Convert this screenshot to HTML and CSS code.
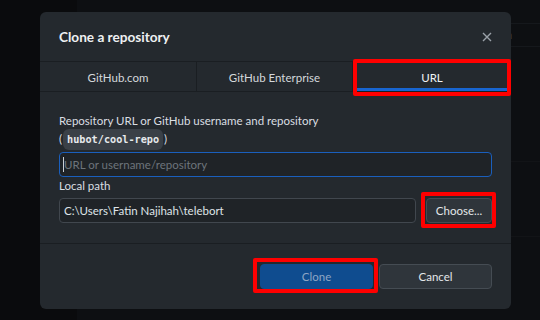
FILE: index.html
```html
<!DOCTYPE html>
<html lang="en">
<head>
<meta charset="utf-8">
<title>Clone a repository</title>
<link rel="stylesheet" href="styles.css">
</head>
<body>
<div class="app">
  <aside class="side"></aside>
  <main class="main">
    <div class="topbar"></div>
    <div class="toolrow"><span class="ghost-btn">Open</span></div>
    <div class="panel"></div>
  </main>
</div>

<div class="dialog">
  <header class="dlg-head">
    <h1 class="title">Clone a repository</h1>
    <button class="close" aria-label="Close">
      <svg width="10" height="10" viewBox="0 0 10 10"><path d="M1 1L9 9M9 1L1 9" stroke="#9aa1a8" stroke-width="1.4" fill="none"/></svg>
    </button>
  </header>
  <nav class="tabs">
    <div class="tab t1">GitHub.com</div>
    <div class="tab t2">GitHub Enterprise</div>
    <div class="tab t3 active hl-tab">URL</div>
  </nav>
  <section class="body">
    <div class="lbl">Repository URL or GitHub username and repository</div>
    <div class="lbl">(<code class="pill">hubot/cool-repo</code>)</div>
    <div class="field focus">
      <input class="inp" type="text" placeholder="URL or username/repository">
      <span class="caret"></span>
    </div>
    <div class="lbl">Local path</div>
    <div class="row">
      <div class="field path"><input class="inp" type="text" value="C:\Users\Fatin Najihah\telebort"></div>
      <button class="btn choose hl">Choose...</button>
    </div>
  </section>
  <footer class="foot">
    <button class="btn primary hl">Clone</button>
    <button class="btn">Cancel</button>
  </footer>
</div>
</body>
</html>
```

FILE: styles.css
```css
* { box-sizing: border-box; }
html, body {
  margin: 0;
  padding: 0;
  width: 540px;
  height: 320px;
  overflow: hidden;
  background: #0d0f12;
  font-family: "Lato", "Noto Sans", sans-serif;
}
.app {
  display: flex;
  width: 540px;
  height: 320px;
}
.side {
  width: 108px;
  background: #0a0b0d;
}
.main {
  flex: 1;
  display: flex;
  flex-direction: column;
  background: #0d0f12;
}
.topbar { height: 23px; }
.toolrow {
  height: 24px;
  padding-left: 403px;
  border-top: 1px solid #15181c;
  border-bottom: 1px solid #15181c;
}
.ghost-btn {
  display: block;
  height: 24px;
  width: 60px;
  border-left: 1px solid #1f2327;
  padding-left: 2px;
  font-size: 12px;
  line-height: 22px;
  color: #3d4349;
}
.panel {
  margin-top: 114px;
  height: 76px;
  border-top: 1px solid #121417;
  border-bottom: 1px solid #121417;
}

.dialog {
  position: absolute;
  left: 40px;
  top: 12px;
  width: 471px;
  height: 297px;
  background: #24292e;
  border-radius: 6px;
  display: flex;
  flex-direction: column;
}
.dlg-head {
  box-sizing: content-box;
  height: 49px;
  border-bottom: 1px solid #1a1e22;
  display: flex;
  align-items: center;
  justify-content: space-between;
  padding: 0 14px 0 19px;
}
.title {
  margin: 0;
  font-size: 13.6px;
  font-weight: 700;
  color: #eef0f2;
  padding-top: 1px;
}
.close {
  width: 20px;
  height: 20px;
  padding: 0;
  border: 0;
  background: transparent;
  display: flex;
  align-items: center;
  justify-content: center;
}
.tabs {
  box-sizing: content-box;
  height: 29px;
  border-bottom: 1px solid #1a1e22;
  display: flex;
}
.tab {
  position: relative;
  flex: none;
  display: flex;
  align-items: center;
  justify-content: center;
  font-size: 11.5px;
  color: #d4d8dc;
  border-right: 1px solid #1a1e22;
  padding-top: 1px;
}
.t1 { width: 157px; }
.t2 { width: 156px; }
.t3 { width: 158px; border-right: 0; }
.tab.active {
  color: #f2f4f6;
  box-shadow: inset 0 -3px 0 #1865d0;
}
.hl-tab::after {
  content: "";
  position: absolute;
  left: 0;
  right: 0;
  top: -3px;
  bottom: -5px;
  border: 4px solid #ff0000;
  border-radius: 2px;
}
.body {
  height: 111px;
  padding: 20px 19px 20px;
  border-bottom: 1px solid #1a1e22;
  box-sizing: content-box;
  display: flex;
  flex-direction: column;
}
.lbl {
  font-size: 11.5px;
  line-height: 18px;
  color: #dadee2;
}
.pill {
  display: inline-block;
  font-family: "DejaVu Sans Mono", "Liberation Mono", monospace;
  font-size: 10.2px;
  font-weight: bold;
  line-height: 17px;
  padding: 2px 4px;
  margin: -2px 1px;
  background: #3a4047;
  color: #e6e9ec;
  border-radius: 6px;
}
.field {
  position: relative;
  height: 25px;
  border: 1px solid #41474e;
  border-radius: 4px;
  background: #1f2327;
}
.field.focus {
  margin-top: 4px;
  border-color: #1a5fbd;
}
.inp {
  width: 100%;
  height: 100%;
  border: 0;
  outline: 0;
  background: transparent;
  padding: 0 4px;
  font-family: "Lato", "Noto Sans", sans-serif;
  font-size: 11.5px;
  color: #dfe3e7;
}
.inp::placeholder { color: #6d747b; }
.caret {
  position: absolute;
  left: 3px;
  top: 4px;
  width: 1px;
  height: 15px;
  background: #c8ced4;
}
.row {
  margin-top: 3px;
  display: flex;
  gap: 10px;
}
.field.path { flex: 1; }
.btn {
  position: relative;
  height: 25px;
  padding: 0;
  border: 1px solid #454c53;
  border-radius: 4px;
  background: #2f353b;
  color: #e4e7ea;
  font-family: "Lato", "Noto Sans", sans-serif;
  font-size: 11.5px;
}
.choose { width: 66px; }
.foot {
  flex: 1;
  display: flex;
  justify-content: flex-end;
  align-items: flex-start;
  gap: 6px;
  padding: 20px 19px 0;
}
.foot .btn { width: 113px; }
.primary {
  background: #0f4c8f;
  border-color: #0f4c8f;
  color: #8ea6c4;
}
.choose.hl::after {
  content: "";
  position: absolute;
  left: -6px;
  right: -5px;
  top: -7px;
  bottom: -6px;
  border: 4px solid #ff0000;
  border-radius: 2px;
}
.primary.hl::after {
  content: "";
  position: absolute;
  left: -8px;
  right: -6px;
  top: -7px;
  bottom: -5px;
  border: 4px solid #ff0000;
  border-radius: 2px;
}
```
